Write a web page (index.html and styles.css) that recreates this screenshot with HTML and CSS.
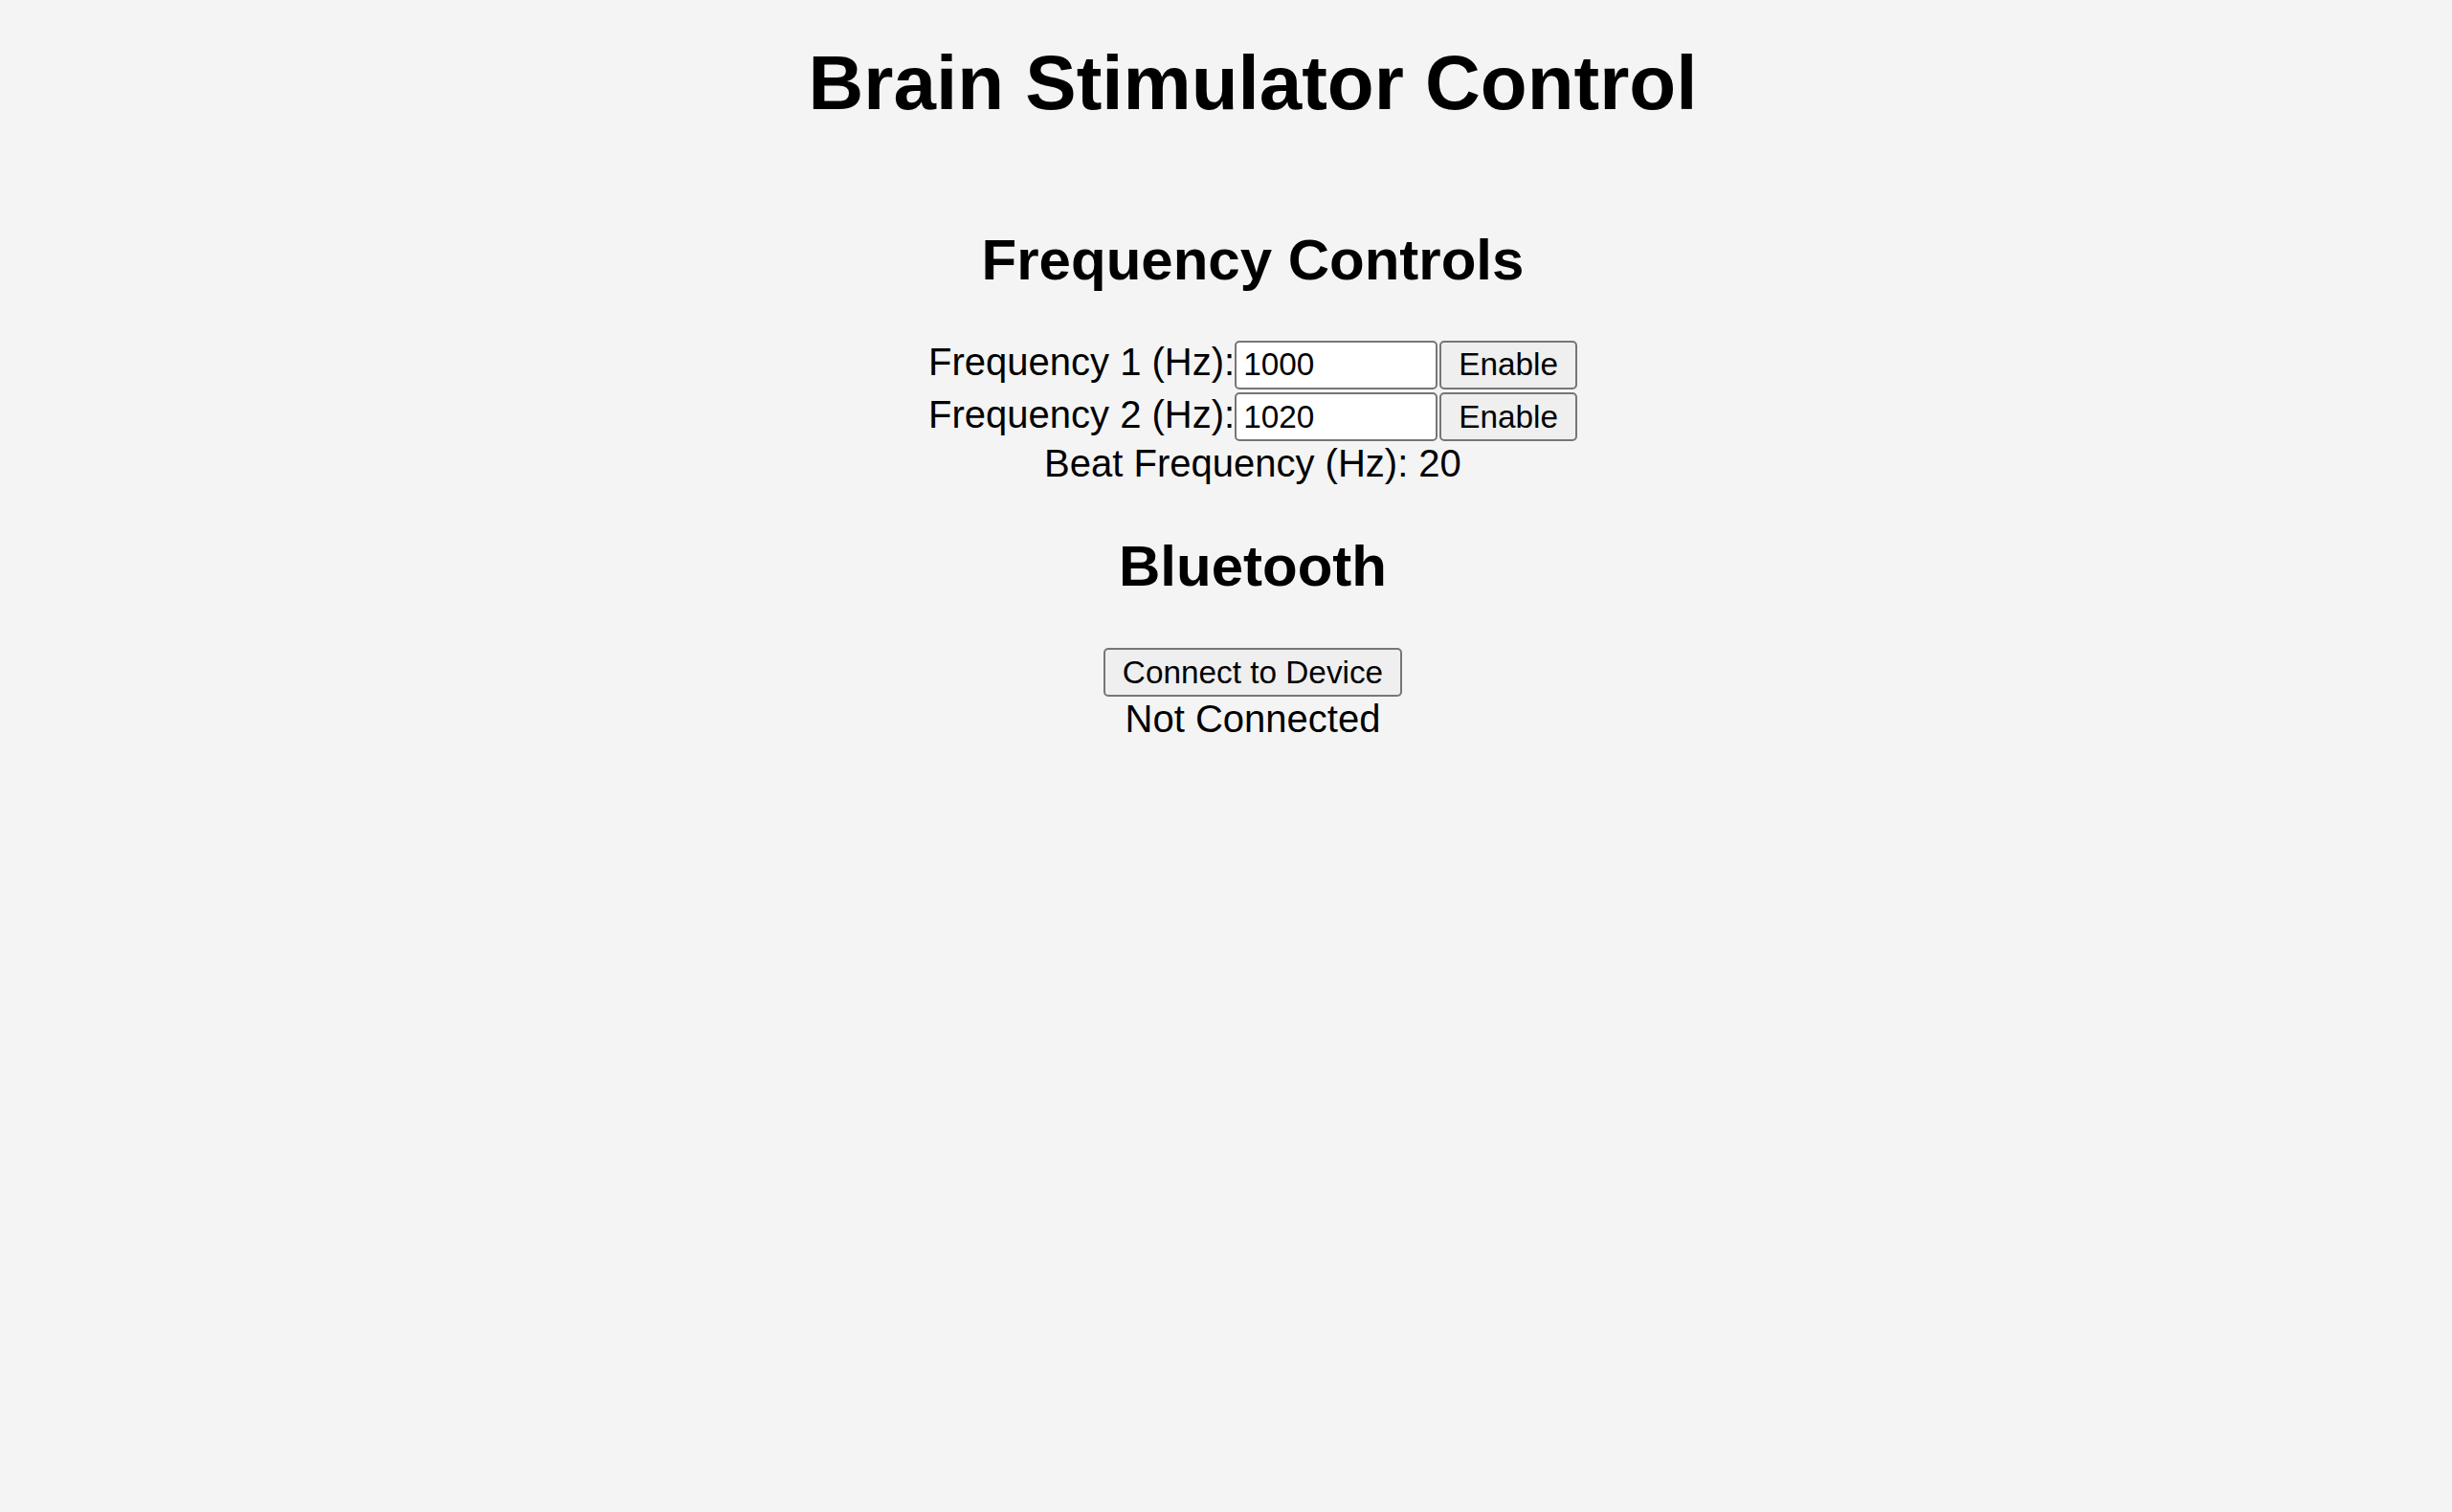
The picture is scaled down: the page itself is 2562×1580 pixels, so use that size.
FILE: index.html
```html
<!DOCTYPE html>
<html lang="en">
<head>
<meta charset="utf-8">
<title>Brain Stimulator Control</title>
<link rel="stylesheet" href="styles.css">
</head>
<body>
<main class="app">
  <h1 class="title">Brain Stimulator Control</h1>
  <section class="panel">
    <h2 class="section-title">Frequency Controls</h2>
    <div class="freq-row">
      <label class="freq-label" for="freq1">Frequency 1 (Hz):</label><input class="freq-input" id="freq1" type="number" value="1000"><button class="btn btn-enable" type="button">Enable</button>
    </div>
    <div class="freq-row">
      <label class="freq-label" for="freq2">Frequency 2 (Hz):</label><input class="freq-input" id="freq2" type="number" value="1020"><button class="btn btn-enable" type="button">Enable</button>
    </div>
    <div class="beat">Beat Frequency (Hz): <span class="beat-value">20</span></div>
  </section>
  <section class="panel panel-bt">
    <h2 class="section-title">Bluetooth</h2>
    <button class="btn btn-connect" type="button">Connect to Device</button>
    <div class="status">Not Connected</div>
  </section>
</main>
</body>
</html>
```

FILE: styles.css
```css
html, body {
  background: #f4f4f4;
}

body {
  margin: 0;
  padding: 0 20px 0 76px;
  font-family: "Liberation Sans", Arial, sans-serif;
  font-size: 40px;
  line-height: 46px;
  color: #000;
}

.app {
  display: flex;
  flex-direction: column;
  align-items: center;
}

.title {
  font-size: 80px;
  line-height: 92px;
  font-weight: bold;
  margin: 41px 0 54px;
}

.panel {
  display: flex;
  flex-direction: column;
  align-items: center;
}

.section-title {
  font-size: 60px;
  line-height: 69px;
  font-weight: bold;
  margin: 50px 0 49px;
}

.freq-row {
  display: flex;
  align-items: baseline;
}

.freq-row + .freq-row {
  margin-top: 3px;
}

.freq-label {
  line-height: 46px;
}

.freq-input {
  box-sizing: border-box;
  width: 212px;
  height: 51px;
  margin: 0;
  padding: 0 5px 0 7px;
  border: 2px solid #767676;
  border-radius: 5px;
  background: #fff;
  color: #000;
  font-family: "Liberation Sans", Arial, sans-serif;
  font-size: 33.33px;
  line-height: normal;
  -moz-appearance: textfield;
}

.freq-input::-webkit-inner-spin-button,
.freq-input::-webkit-outer-spin-button {
  -webkit-appearance: none;
  margin: 0;
}

.btn {
  box-sizing: border-box;
  height: 51px;
  margin: 0;
  padding: 0 18px;
  border: 2px solid #767676;
  border-radius: 5px;
  background: #efefef;
  color: #000;
  font-family: "Liberation Sans", Arial, sans-serif;
  font-size: 33.33px;
  line-height: normal;
}

.btn-enable {
  margin-left: 2px;
}

.btn-connect {
  margin-top: 2px;
}

.beat {
  line-height: 46px;
}

.status {
  margin-top: 0;
  line-height: 46px;
}
```
